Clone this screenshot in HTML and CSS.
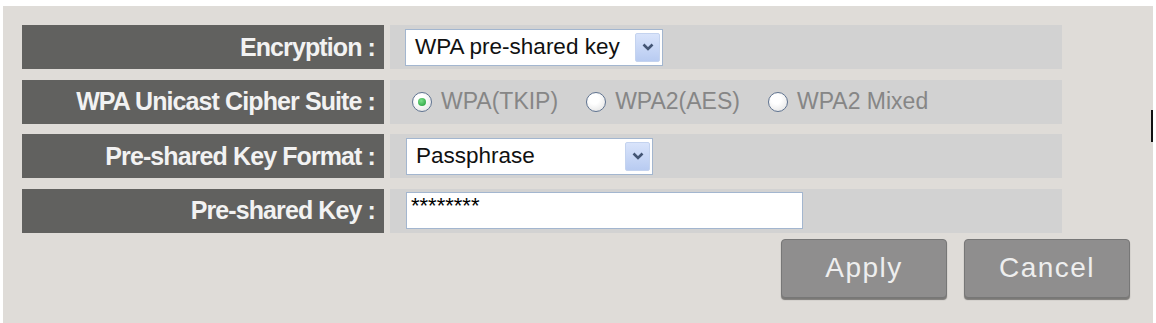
FILE: index.html
```html
<!DOCTYPE html>
<html lang="en">
<head>
    <meta charset="UTF-8">
    <title>Wireless Security</title>
    <link rel="stylesheet" href="styles.css">
</head>
<body>
    <div class="panel">
        <div class="form">
            <div class="row">
                <div class="label">Encryption :</div>
                <div class="value">
                    <div class="select select-enc">
                        <span class="select-text">WPA pre-shared key</span>
                        <span class="arrow">
                            <svg width="12" height="8" viewBox="0 0 12 8"><path d="M1.5 1.5 L6 6 L10.5 1.5" fill="none" stroke="#435574" stroke-width="2.6"/></svg>
                        </span>
                    </div>
                </div>
            </div>
            <div class="row">
                <div class="label">WPA Unicast Cipher Suite :</div>
                <div class="value radios">
                    <label class="opt"><span class="radio checked"></span>WPA(TKIP)</label>
                    <label class="opt"><span class="radio"></span>WPA2(AES)</label>
                    <label class="opt"><span class="radio"></span>WPA2 Mixed</label>
                </div>
            </div>
            <div class="row">
                <div class="label">Pre-shared Key Format :</div>
                <div class="value">
                    <div class="select select-fmt">
                        <span class="select-text">Passphrase</span>
                        <span class="arrow">
                            <svg width="12" height="8" viewBox="0 0 12 8"><path d="M1.5 1.5 L6 6 L10.5 1.5" fill="none" stroke="#435574" stroke-width="2.6"/></svg>
                        </span>
                    </div>
                </div>
            </div>
            <div class="row">
                <div class="label">Pre-shared Key :</div>
                <div class="value">
                    <div class="textbox">********</div>
                </div>
            </div>
        </div>
        <div class="actions">
            <button class="btn">Apply</button>
            <button class="btn">Cancel</button>
        </div>
        <span class="caret"></span>
    </div>
</body>
</html>
```

FILE: styles.css
```css
body {
    margin: 0;
    background: #ffffff;
    font-family: 'Liberation Sans', Arial, sans-serif;
}

.panel {
    position: relative;
    margin: 6px 3px 0;
    height: 317px;
    box-sizing: border-box;
    padding: 19px 23px 0 19px;
    background: #dfdcd8;
}

.form {
    display: flex;
    flex-direction: column;
    gap: 10.5px;
    width: 1040px;
}

.row {
    display: grid;
    grid-template-columns: 362px 672px;
    column-gap: 6px;
    height: 44px;
}

.label {
    background: #61615f;
    color: #f2f2f2;
    font-weight: bold;
    font-size: 25px;
    letter-spacing: -0.9px;
    text-align: right;
    padding-right: 9px;
    display: flex;
    align-items: center;
    justify-content: flex-end;
}

.value {
    background: #d2d2d2;
    display: flex;
    align-items: center;
    padding-left: 15px;
    font-size: 22.5px;
}

/* fake select boxes */
.select {
    box-sizing: border-box;
    height: 37px;
    background: #fff;
    border: 1px solid #a3b6cf;
    display: flex;
    align-items: center;
    justify-content: space-between;
    padding: 3px 2px 3px 9px;
    color: #111;
}

.select-enc {
    width: 258px;
}

.select-fmt {
    width: 247px;
    margin-left: 1px;
}

.arrow {
    width: 25px;
    height: 100%;
    box-sizing: border-box;
    border: 1px solid #c4d3ef;
    border-radius: 2px;
    background: linear-gradient(#d9e4fb, #b8cbf1);
    display: flex;
    align-items: center;
    justify-content: center;
}

/* radio row */
.radios {
    padding-left: 22px;
    gap: 28px;
    color: #868686;
    font-size: 23px;
}

.opt {
    display: flex;
    align-items: center;
    gap: 9px;
}

.radio {
    width: 20px;
    height: 20px;
    box-sizing: border-box;
    border: 1.5px solid #5f7390;
    border-radius: 50%;
    background: radial-gradient(circle at 40% 35%, #ffffff 30%, #dedede 100%);
    display: flex;
    align-items: center;
    justify-content: center;
}

.radio.checked::after {
    content: '';
    width: 8px;
    height: 8px;
    border-radius: 50%;
    background: radial-gradient(circle at 40% 35%, #7be08a, #1e9a36);
}

.textbox {
    box-sizing: border-box;
    width: 397px;
    height: 37px;
    margin-left: 1px;
    align-self: center;
    background: #fff;
    border: 1px solid #a3b6cf;
    padding: 1px 4px;
    font-size: 22px;
    line-height: 24px;
    color: #000;
}

.actions {
    display: flex;
    justify-content: flex-end;
    gap: 17px;
    margin-top: 6px;
}

.btn {
    width: 166px;
    height: 59px;
    background: #8f8e8e;
    border: 1px solid #777;
    border-radius: 4px;
    box-shadow: 0 2px 1px rgba(0, 0, 0, 0.45);
    color: #eeeeee;
    font-family: 'Liberation Sans', Arial, sans-serif;
    font-size: 28px;
    letter-spacing: 1.5px;
    cursor: pointer;
}

.caret {
    position: absolute;
    right: 0;
    top: 104px;
    width: 2px;
    height: 32px;
    background: #111;
}
```
